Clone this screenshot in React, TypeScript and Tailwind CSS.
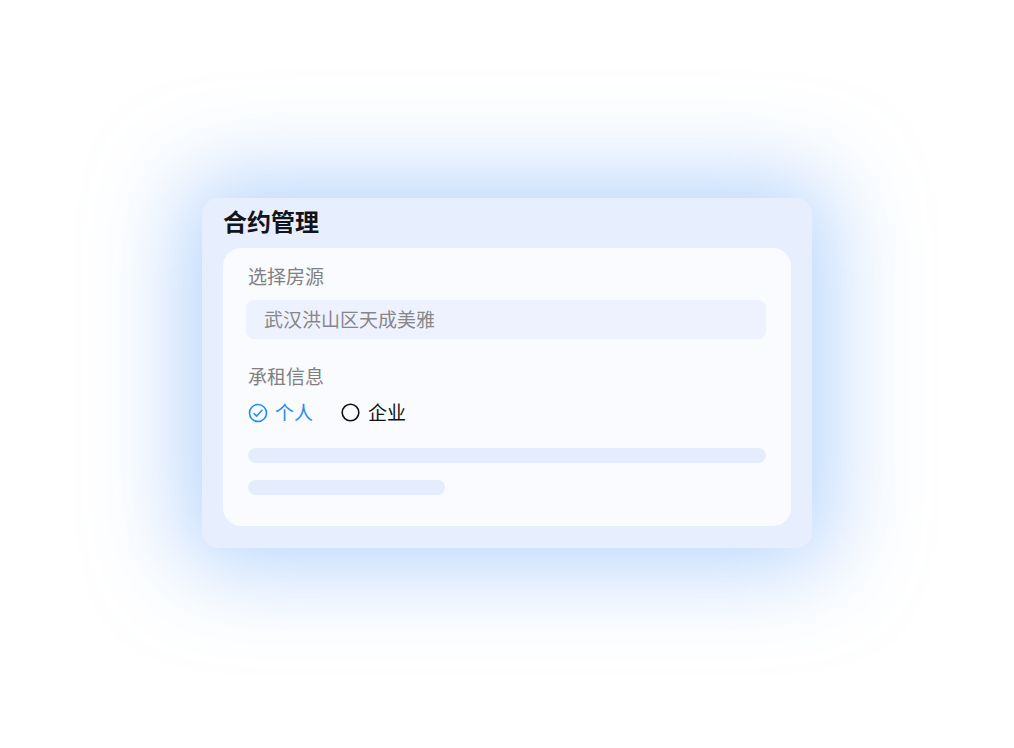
import React from 'react'

const font = { fontFamily: '"Noto Sans CJK SC", "Noto Sans", sans-serif' }

function CheckCircle() {
    return (
        <svg width="20" height="20" viewBox="0 0 24 24" fill="none" stroke="#1e8cf7" strokeWidth="1.9" strokeLinecap="round" strokeLinejoin="round">
            <circle cx="12" cy="12" r="10.2" />
            <path d="M7.2 12.6l3.2 3.1 6.4-7" />
        </svg>
    )
}

function EmptyCircle() {
    return (
        <svg width="19" height="19" viewBox="0 0 24 24" fill="none" stroke="#111" strokeWidth="2">
            <circle cx="12" cy="12" r="10.5" />
        </svg>
    )
}

export default function App() {
    return (
        <div className="w-full h-screen bg-white flex items-center justify-center pb-[3px]" style={font}>
            <div className="w-[610px] rounded-[16px] bg-[#e7eefd] px-[21px] pt-[7px] pb-[22px] shadow-[0_0_90px_20px_rgba(125,178,250,0.55)]">
                <h1 className="text-[24px] leading-[32px] font-bold text-[#111418]">合约管理</h1>
                <div className="mt-[11px] rounded-[18px] bg-[#f9fbff] pl-[25px] pr-[25px] pt-[16px] pb-[31px]">
                    <div className="text-[19px] leading-[24px] text-[#808080]">选择房源</div>
                    <div className="mt-[12px] -ml-[2px] h-[39px] rounded-[8px] bg-[#edf2fe] pl-[18px] flex items-center text-[19px] text-[#878787]">
                        武汉洪山区天成美雅
                    </div>
                    <div className="mt-[25px] text-[19px] leading-[24px] text-[#808080]">承租信息</div>
                    <div className="mt-[13px] flex items-center h-[24px] text-[19px]">
                        <div className="flex items-center gap-[7px] text-[#1e8cf7]">
                            <CheckCircle />
                            <span>个人</span>
                        </div>
                        <div className="ml-[28px] flex items-center gap-[8px] text-[#111]">
                            <EmptyCircle />
                            <span>企业</span>
                        </div>
                    </div>
                    <div className="mt-[23px] h-[15px] rounded-full bg-[#e5ecfd]" />
                    <div className="mt-[17px] h-[15px] w-[197px] rounded-full bg-[#e5ecfd]" />
                </div>
            </div>
        </div>
    )
}
